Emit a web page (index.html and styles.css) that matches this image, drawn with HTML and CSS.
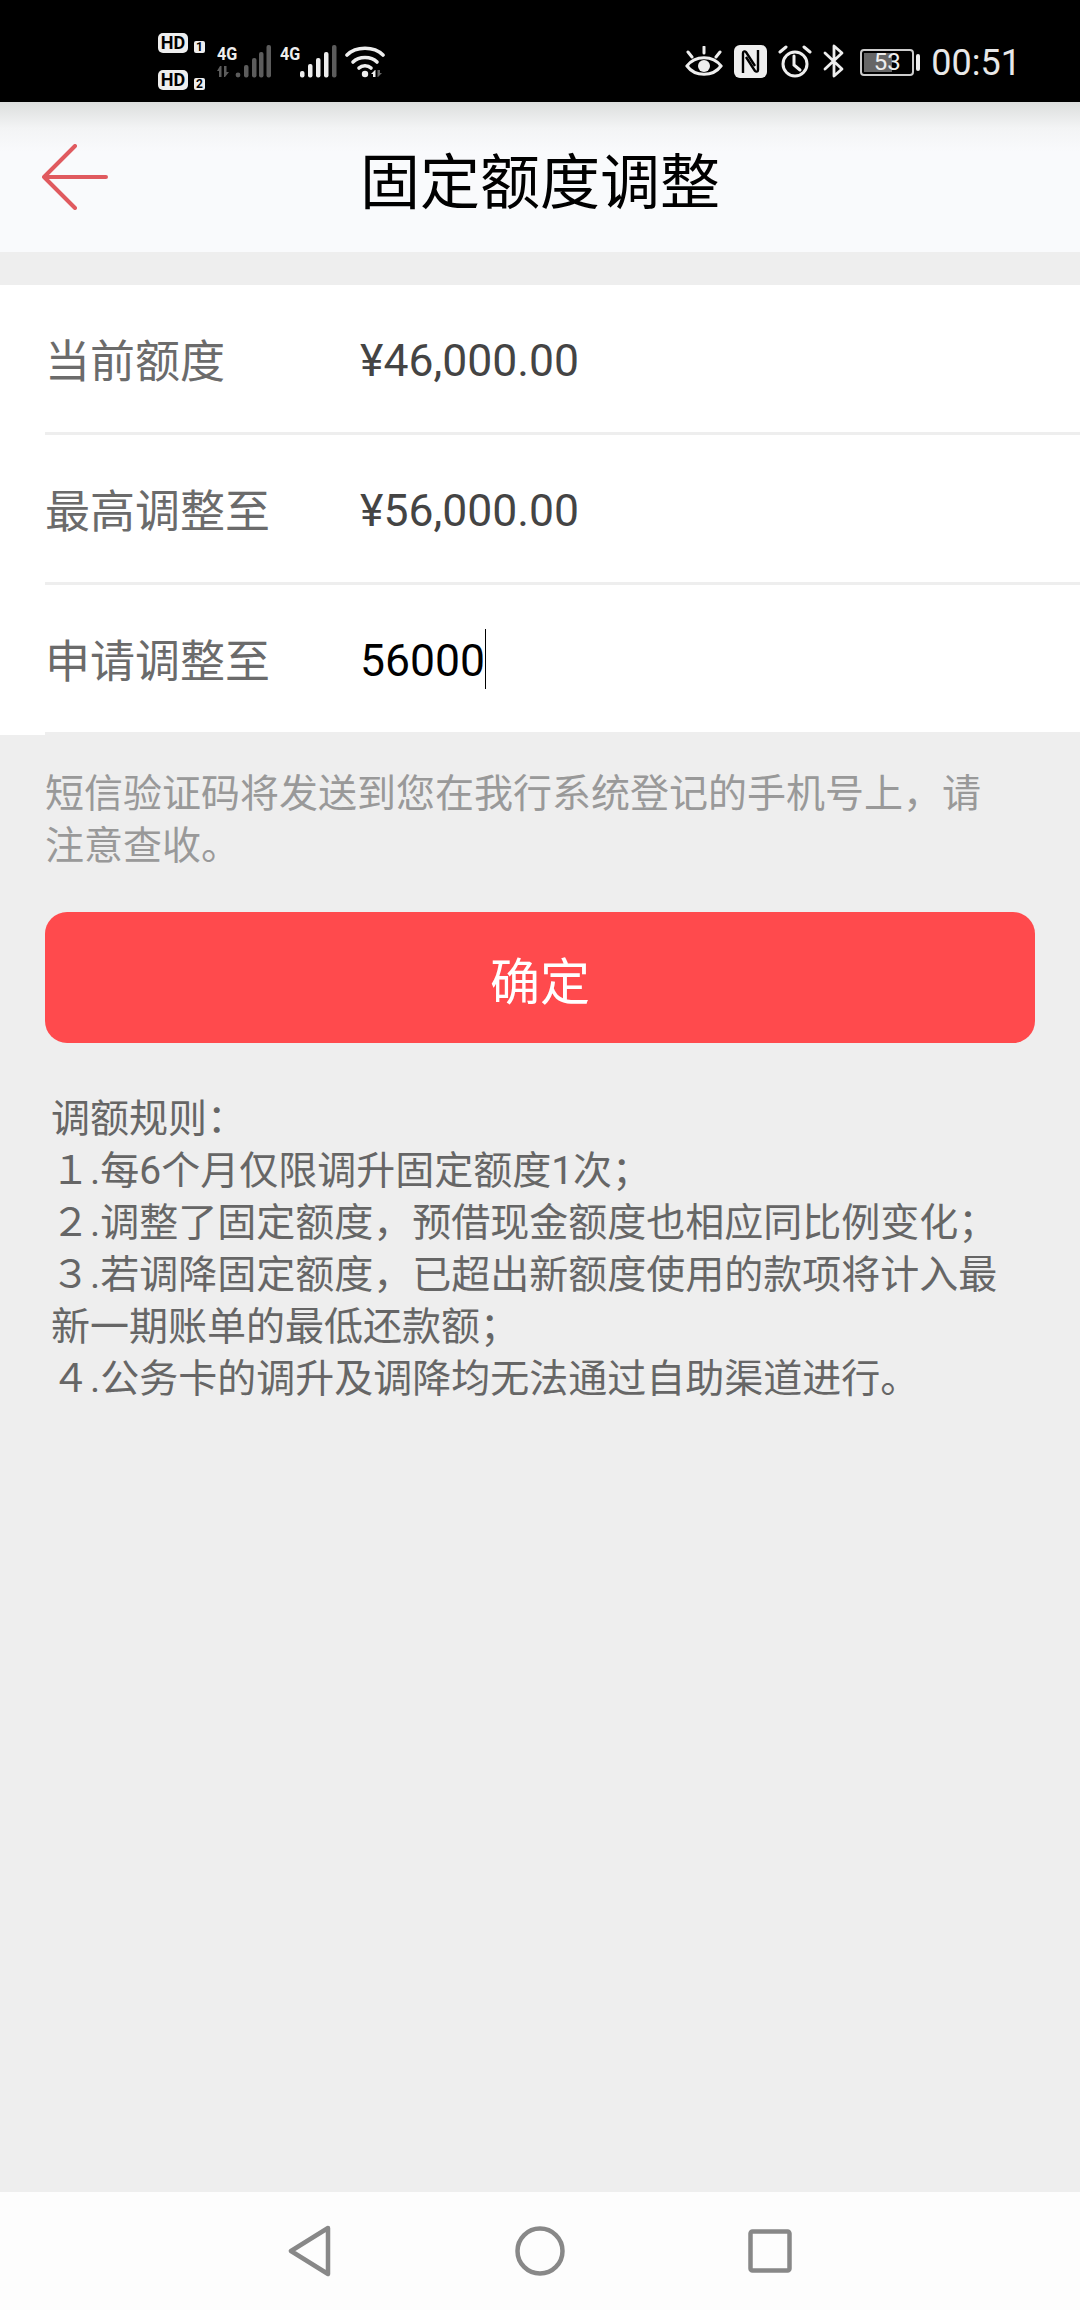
FILE: index.html
```html
<!DOCTYPE html>
<html lang="zh-CN">
<head>
    <meta charset="UTF-8">
    <meta name="viewport" content="width=device-width, initial-scale=1.0">
    <title>固定额度调整</title>
    <link rel="stylesheet" href="styles.css">
</head>
<body>
<!-- Status bar -->
<div class="status-bar">
    <div class="status-left">
        <div class="sims">
            <div class="sim"><span class="hd">HD</span><span class="sim-no">1</span></div>
            <div class="sim"><span class="hd">HD</span><span class="sim-no">2</span></div>
        </div>
        <div class="signal">
            <span class="net">4G</span>
            <svg width="54" height="33" viewBox="0 0 54 33">
                <g fill="#5c5c5c">
                    <path d="M3 21l-3 5h2v6h2.500v-11zM8 32l4-5h-2.500v-6h-2.500v11z"/>
                    <circle cx="21" cy="30" r="2.4"/>
                    <rect x="27" y="20" width="4.500" height="12.500" rx="2"/>
                    <rect x="35" y="13" width="4.500" height="19.500" rx="2"/>
                    <rect x="42" y="7" width="4.500" height="25.500" rx="2"/>
                    <rect x="49.500" y="0" width="4.500" height="32.500" rx="2"/>
                </g>
            </svg>
        </div>
        <div class="signal signal-main">
            <span class="net">4G</span>
            <svg class="bars" width="37" height="33" viewBox="0 0 37 33">
                <rect x="0" y="26" width="4.500" height="6.500" rx="2" fill="#eee"/>
                <rect x="8" y="19" width="4.500" height="13.500" rx="2" fill="#eee"/>
                <rect x="16" y="13" width="4.500" height="19.500" rx="2" fill="#eee"/>
                <rect x="24" y="7" width="4.500" height="25.500" rx="2" fill="#eee"/>
                <rect x="32" y="0" width="4.500" height="32.500" rx="2" fill="#5c5c5c"/>
            </svg>
        </div>
        <svg class="wifi" width="42" height="34" viewBox="0 0 42 34">
            <g fill="none" stroke="#eee" stroke-width="3.600" stroke-linecap="round">
                <path d="M2 11C11 2 29 2 38 11"/>
                <path d="M8 18C14 12 26 12 32 18"/>
                <path d="M14 24C17 21 23 21 26 24"/>
            </g>
            <circle cx="20" cy="30" r="3.200" fill="#eee"/>
            <path d="M30 26l-4 4h2v3h2.500v-7z" fill="#eee"/>
            <path d="M33 33l4-4h-2v-3h-2.500v7z" fill="#666"/>
        </svg>
    </div>
    <div class="status-right">
        <svg width="38" height="32" viewBox="0 0 38 32">
            <g fill="none" stroke="#eee" stroke-width="3" stroke-linecap="round">
                <path d="M2 20C10 9 28 9 36 20C28 31 10 31 2 20Z"/>
                <path d="M19 1v6M3 6l4 5M35 6l-4 5"/>
            </g>
            <circle cx="19" cy="20" r="6" fill="#eee"/>
        </svg>
        <svg width="33" height="33" viewBox="0 0 33 33">
            <rect width="33" height="33" rx="6" fill="#eee"/>
            <g fill="none" stroke="#000" stroke-width="2.400">
                <path d="M9 28V8c0-2 2-2 3-1l9 14"/>
                <path d="M24 5v20c0 2-2 2-3 1L12 12"/>
            </g>
        </svg>
        <svg width="34" height="33" viewBox="0 0 34 33">
            <g fill="none" stroke="#eee" stroke-width="3" stroke-linecap="round">
                <circle cx="17" cy="19" r="12"/>
                <path d="M16 11v9l6 5"/>
                <path d="M2 7l6-5M32 7l-6-5"/>
            </g>
        </svg>
        <svg width="22" height="34" viewBox="0 0 22 34">
            <path d="M2 9l17 16-8 7V2l8 7L2 25" fill="none" stroke="#eee" stroke-width="2.800" stroke-linejoin="round" stroke-linecap="round"/>
        </svg>
        <div class="battery">
            <div class="battery-body">
                <div class="battery-fill"></div>
                <span class="battery-num">53</span>
            </div>
            <div class="battery-cap"></div>
        </div>
        <span class="clock">00:51</span>
    </div>
</div>

<!-- Title bar -->
<div class="title-bar">
    <div class="back">
        <svg width="66" height="66" viewBox="0 0 66 66">
            <path d="M33 2L2 33L33 64M2 33H64" fill="none" stroke="#e05a5f" stroke-width="4" stroke-linecap="round" stroke-linejoin="round"/>
        </svg>
    </div>
    <h1>固定额度调整</h1>
    <div></div>
</div>

<div class="main-content">
    <div class="form-list">
        <div class="form-row">
            <span class="form-label">当前额度</span>
            <span class="form-value">¥46,000.00</span>
        </div>
        <div class="form-row">
            <span class="form-label">最高调整至</span>
            <span class="form-value">¥56,000.00</span>
        </div>
        <div class="form-row">
            <span class="form-label">申请调整至</span>
            <span class="form-input">56000</span>
        </div>
    </div>

    <p class="hint">短信验证码将发送到您在我行系统登记的手机号上，请注意查收。</p>

    <button class="confirm">确定</button>

    <div class="rules">
        <p>调额规则：</p>
        <p>１.每6个月仅限调升固定额度1次；</p>
        <p>２.调整了固定额度，预借现金额度也相应同比例变化；</p>
        <p>３.若调降固定额度，已超出新额度使用的款项将计入最新一期账单的最低还款额；</p>
        <p>４.公务卡的调升及调降均无法通过自助渠道进行。</p>
    </div>
</div>

<!-- Navigation keys -->
<div class="nav-bar">
    <svg width="44" height="52" viewBox="0 0 44 52">
        <path d="M40 3L3 26L40 49Z" fill="none" stroke="#888" stroke-width="4.500" stroke-linejoin="round"/>
    </svg>
    <svg width="50" height="50" viewBox="0 0 50 50">
        <circle cx="25" cy="25" r="22.500" fill="none" stroke="#888" stroke-width="4.500"/>
    </svg>
    <svg width="44" height="44" viewBox="0 0 44 44">
        <rect x="2.500" y="2.500" width="39" height="39" rx="2" fill="none" stroke="#888" stroke-width="4.500"/>
    </svg>
</div>
</body>
</html>
```

FILE: styles.css
```css
body {
    font-family: Roboto, "Noto Sans CJK SC", sans-serif;
    background-color: #eeeeee;
    margin: 0;
    width: 1080px;
    height: 2310px;
    display: flex;
    flex-direction: column;
    overflow: hidden;
}

/* Status bar */
.status-bar {
    height: 102px;
    flex-shrink: 0;
    background: #000;
    color: #eee;
    display: flex;
    justify-content: space-between;
    align-items: flex-end;
    padding: 0 59px 24px 158px;
    box-sizing: border-box;
}
.status-left,
.status-right {
    display: flex;
    align-items: flex-end;
}
.status-right {
    gap: 11px;
}
.sims {
    display: flex;
    flex-direction: column;
    gap: 17px;
    margin-bottom: -12px;
}
.sim {
    display: flex;
    align-items: flex-end;
    gap: 6px;
}
.hd {
    width: 30px;
    height: 20px;
    background: #eee;
    color: #000;
    border-radius: 5px;
    font: bold 18px/20px Roboto, sans-serif;
    text-align: center;
}
.sim-no {
    width: 11px;
    height: 12px;
    background: #eee;
    color: #000;
    border-radius: 2px;
    font: bold 12px/12px Roboto, sans-serif;
    text-align: center;
}
.signal {
    position: relative;
    margin-left: 12px;
}
.signal-main {
    margin-left: 9px;
}
.signal .net {
    font: bold 19px/18px Roboto, sans-serif;
    color: #eee;
    position: absolute;
    left: 0;
    top: 0;
    transform: scaleX(0.85);
    transform-origin: left;
}
.signal .bars {
    margin-left: 20px;
}
.signal svg {
    display: block;
}
.wifi {
    margin-left: 8px;
    display: block;
}
.battery {
    display: flex;
    align-items: center;
    gap: 2px;
    margin-left: 4px;
    margin-bottom: 2px;
}
.battery-body {
    position: relative;
    width: 54px;
    height: 27px;
    box-sizing: border-box;
    border: 2px solid #ccc;
    border-radius: 4px;
    padding: 2px;
}
.battery-fill {
    width: 60%;
    height: 100%;
    background: #666;
}
.battery-num {
    position: absolute;
    left: 0;
    right: 0;
    top: 0;
    text-align: center;
    font: 24px/23px Roboto, sans-serif;
    color: #eee;
}
.battery-cap {
    width: 4px;
    height: 17px;
    background: #eee;
    border-radius: 2px;
}
.clock {
    font: 400 36px/34px Roboto, sans-serif;
    color: #e8e8e8;
    margin-bottom: -2px;
}

/* Title bar */
.title-bar {
    height: 150px;
    flex-shrink: 0;
    background: linear-gradient(#dcdedd 0, #f3f4f5 26px, #f9fafc 50px);
    display: grid;
    grid-template-columns: 1fr auto 1fr;
    align-items: center;
}
.back {
    padding-left: 42px;
}
.back svg {
    display: block;
}
.title-bar h1 {
    margin: 0;
    font-size: 60px;
    font-weight: 400;
    color: #000;
}

/* Main content */
.main-content {
    flex-grow: 1;
    padding-top: 33px;
}
.form-list {
    background: #fff;
}
.form-row {
    height: 150px;
    box-sizing: border-box;
    margin-left: 45px;
    border-bottom: 3px solid #eeeeee;
    display: flex;
    align-items: center;
}
.form-label {
    width: 315px;
    font-size: 45px;
    color: #6b6b6b;
}
.form-value {
    font-size: 44.5px;
    color: #444;
    padding-top: 4px;
}
.form-input {
    font-size: 44.5px;
    color: #000;
    border-right: 1px solid #000;
    line-height: 56px;
    padding-top: 4px;
}
.hint {
    margin: 33px 72px 0 45px;
    font-size: 39px;
    line-height: 52px;
    color: #999;
}
.confirm {
    display: block;
    width: 990px;
    height: 131px;
    margin: 40px 45px 0;
    border: none;
    border-radius: 22px;
    background: #ff4a4d;
    color: #fff;
    font-family: inherit;
    font-size: 50px;
}
.rules {
    margin: 50px 50px 0 51px;
    font-size: 39px;
    line-height: 52px;
    color: #666;
}
.rules p {
    margin: 0;
}

/* Navigation keys */
.nav-bar {
    height: 118px;
    flex-shrink: 0;
    background: #fdfdfd;
    display: flex;
    align-items: center;
    padding-left: 288px;
    gap: 183px;
}
.nav-bar svg {
    display: block;
}
```
